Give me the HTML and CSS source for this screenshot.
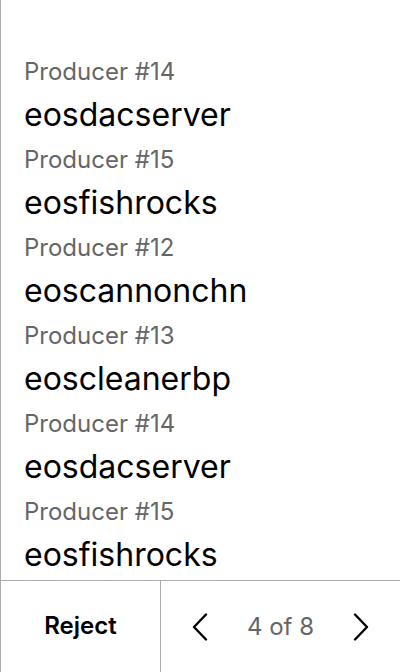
FILE: index.html
```html
<!DOCTYPE html>
<html>
<head>
<meta charset="utf-8">
<link rel="stylesheet" href="styles.css">
</head>
<body>
<div class="screen">
  <div class="list">
    <div class="item"><div class="label">Producer #14</div><div class="name">eosdacserver</div></div>
    <div class="item"><div class="label">Producer #15</div><div class="name">eosfishrocks</div></div>
    <div class="item"><div class="label">Producer #12</div><div class="name">eoscannonchn</div></div>
    <div class="item"><div class="label">Producer #13</div><div class="name">eoscleanerbp</div></div>
    <div class="item"><div class="label">Producer #14</div><div class="name">eosdacserver</div></div>
    <div class="item"><div class="label">Producer #15</div><div class="name">eosfishrocks</div></div>
  </div>
  <div class="footer">
    <div class="reject">Reject</div>
    <div class="pager">
      <svg class="chev" viewBox="0 0 16 28" width="16" height="28"><polyline points="14,1.5 2,14 14,26.5"/></svg>
      <span class="count">4 of 8</span>
      <svg class="chev" viewBox="0 0 16 28" width="16" height="28"><polyline points="2,1.5 14,14 2,26.5"/></svg>
    </div>
  </div>
</div>
</body>
</html>
```
FILE: styles.css
```css
html, body {
  margin: 0;
  padding: 0;
  background: #fff;
}
body {
  font-family: Inter, "Noto Sans", sans-serif;
  color: #000;
}
.screen {
  width: 400px;
  height: 672px;
  box-sizing: border-box;
  border-left: 1px solid #ababab;
  display: flex;
  flex-direction: column;
  overflow: hidden;
}
.list {
  flex: 1;
  padding: 56px 0 0 23px;
  overflow: hidden;
}
.item {
  padding-bottom: 9px;
}
.label {
  font-size: 24px;
  line-height: 32px;
  color: #666;
  margin-bottom: 7px;
}
.name {
  font-size: 32px;
  line-height: 40px;
  color: #000;
}
.footer {
  height: 92px;
  flex: none;
  box-sizing: border-box;
  border-top: 1px solid #ababab;
  display: flex;
}
.reject {
  width: 160px;
  border-right: 1px solid #ababab;
  display: flex;
  align-items: center;
  justify-content: center;
  font-size: 24px;
  font-weight: 600;
  padding-bottom: 2px;
  box-sizing: border-box;
}
.pager {
  flex: 1;
  display: flex;
  align-items: center;
  justify-content: space-between;
  padding: 0 31px 0 31px;
}
.chev polyline {
  fill: none;
  stroke: #000;
  stroke-width: 2.4;
  stroke-linecap: round;
  stroke-linejoin: round;
}
.count {
  font-size: 24px;
  color: #666;
}
```
